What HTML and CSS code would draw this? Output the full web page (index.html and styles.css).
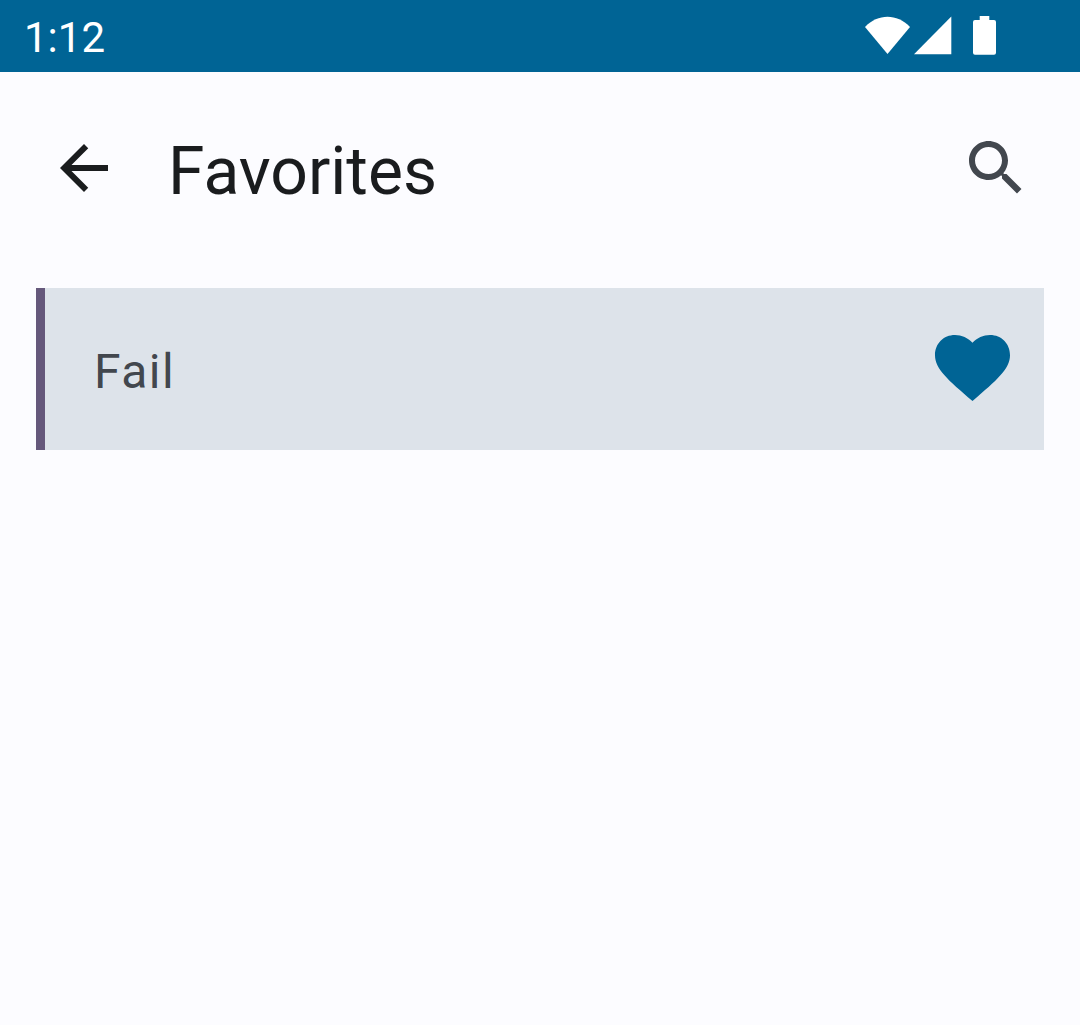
FILE: index.html
```html
<!DOCTYPE html>
<html lang="en">
<head>
<meta charset="utf-8">
<title>Favorites</title>
<link rel="stylesheet" href="styles.css">
</head>
<body>
<div class="status-bar">
  <span class="clock">1:12</span>
  <svg class="status-icons" viewBox="0 0 132 40" aria-hidden="true">
    <path d="M0 12C13 -1.7 32 -1.7 45 12L22.5 39z"/>
    <path d="M49 39.3H86.3V1.5z"/>
    <path d="M114.7 1h9.6v4h4.7a2 2 0 0 1 2 2v30.700a2 2 0 0 1-2 2h-19a2 2 0 0 1-2-2V7a2 2 0 0 1 2-2h4.700z"/>
  </svg>
</div>
<header class="app-bar">
  <svg class="icon back" viewBox="0 0 24 24" aria-label="Back"><path d="M20 11H7.830l5.590-5.590L12 4l-8 8 8 8 1.410-1.410L7.830 13H20v-2z"/></svg>
  <h1 class="title">Favorites</h1>
  <svg class="icon search" viewBox="0 0 24 24" aria-label="Search"><path d="M15.500 14h-.790l-.280-.270C15.410 12.590 16 11.110 16 9.500 16 5.910 13.090 3 9.500 3S3 5.910 3 9.500 5.910 16 9.500 16c1.610 0 3.090-.590 4.230-1.570l.270.280v.790l5 4.990L20.490 19l-4.990-5zm-6 0C7.010 14 5 11.990 5 9.500S7.010 5 9.500 5 14 7.010 14 9.500 11.990 14 9.500 14z"/></svg>
</header>
<main class="list">
  <article class="card">
    <span class="label">Fail</span>
    <svg class="heart" viewBox="0 0 90 90" aria-label="Favorite"><path d="M44.500 77C20 56 7 45 7 31.300 7 19.500 15.500 11 27 11c6.700 0 13 3 17.500 7.700C49 14 55.300 11 62 11c11.500 0 20 8.500 20 20.300C82 45 69 56 44.500 77z"/></svg>
  </article>
</main>
</body>
</html>
```
FILE: styles.css
```css
* { box-sizing: border-box; }
body {
  margin: 0;
  min-height: 100vh;
  background: #fcfcff;
  color: #1a1c1e;
  font-family: Roboto, sans-serif;
}
.status-bar {
  display: flex;
  justify-content: space-between;
  align-items: flex-start;
  height: 72px;
  padding: 15px 83px 0 24px;
  background: #006495;
  color: #fff;
}
.clock {
  font-size: 42px;
  line-height: 46px;
}
.status-icons {
  width: 132px;
  height: 40px;
  fill: currentColor;
}
.app-bar {
  display: flex;
  align-items: center;
  height: 192px;
  padding: 0 48px;
}
.icon {
  width: 72px;
  height: 72px;
  fill: currentColor;
}
.search { color: #42474e; }
.title {
  flex: 1;
  margin: 0 0 0 48px;
  padding-top: 8px;
  font-size: 66px;
  font-weight: 400;
  line-height: 84px;
}
.list { padding: 24px 36px; }
.card {
  display: flex;
  align-items: center;
  justify-content: space-between;
  height: 162px;
  padding: 0 26px 0 49px;
  border-left: 9px solid #65587b;
  background: #dde3ea;
  color: #42474e;
}
.label {
  padding-top: 6px;
  font-size: 48px;
  line-height: 72px;
  letter-spacing: 1.5px;
}
.heart {
  width: 90px;
  height: 90px;
  fill: #006495;
}
```
